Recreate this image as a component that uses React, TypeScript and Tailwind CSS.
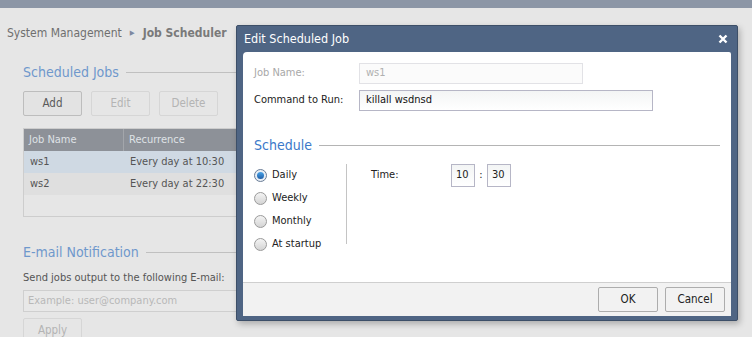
import React from 'react';

const font = { fontFamily: '"DejaVu Sans Condensed", "DejaVu Sans", Verdana, sans-serif' };

function GrayButton({ label, disabled }: { label: string; disabled?: boolean }) {
  return (
    <button
      className={
        'h-[25px] w-[59px] rounded-[2px] border text-[11.5px] ' +
        (disabled ? 'border-[#d6d6d6] bg-[#e6e6e6] text-[#b4b4b4]' : 'border-[#bdbdbd] bg-[#e3e3e3] text-[#5a5a5a]')
      }
    >
      {label}
    </button>
  );
}

function SectionTitle({ title, color, lineColor }: { title: string; color: string; lineColor: string }) {
  return (
    <div className="flex items-center gap-[7px] leading-[20px]">
      <span className={'text-[14px] whitespace-nowrap ' + color}>{title}</span>
      <div className={'h-px flex-1 ' + lineColor} />
    </div>
  );
}

function Radio({ label, checked }: { label: string; checked?: boolean }) {
  return (
    <label className="flex h-[23px] items-center gap-[5px] text-[11px] text-[#222]">
      <span
        className={
          'flex h-[13px] w-[13px] items-center justify-center rounded-full border ' +
          (checked ? 'border-[#6b7d96] bg-[#e8eef5]' : 'border-[#9a9a9a] bg-gradient-to-b from-[#f4f4f4] to-[#d4d4d4]')
        }
      >
        {checked && <span className="h-[7px] w-[7px] rounded-full bg-gradient-to-b from-[#4aa3e8] to-[#1f5fa8]" />}
      </span>
      {label}
    </label>
  );
}

const fieldBox = 'flex items-center border border-[#b6b6c6] bg-gradient-to-b from-[#f3f5f5] to-white';

function EditDialog() {
  return (
    <div className="absolute left-[236px] top-[25px] w-[502px] rounded-[2px] border border-[#3d4f68] bg-[#4f6584] shadow-[2px_3px_6px_rgba(0,0,0,0.25)]">
      <div className="flex h-[26px] items-center justify-between pl-[7px] pr-[9px] text-[12.5px] text-white">
        <span>Edit Scheduled Job</span>
        <svg width="10" height="10" viewBox="0 0 10 10">
          <path d="M1.5 1.5 L8.5 8.5 M8.5 1.5 L1.5 8.5" stroke="white" strokeWidth="2.4" />
        </svg>
      </div>
      <div className="mx-[6px] mb-[4px] overflow-hidden rounded-tl-[4px] rounded-tr-[2px] bg-white">
        <div className="px-[11px] pt-[11px]">
          <div className="flex h-[21px] items-center text-[11px]">
            <span className="w-[105px] text-[#a8a8a8]">Job Name:</span>
            <div className="flex h-[21px] w-[224px] items-center border border-[#e2e2e6] bg-[#fbfbfb] px-[6px] text-[#b0b0b0]">ws1</div>
          </div>
          <div className="mt-[6px] flex h-[21px] items-center text-[11px]">
            <span className="w-[105px] text-[#222]">Command to Run:</span>
            <div className={fieldBox + ' h-[21px] w-[294px] px-[6px] text-[#111]'}>killall wsdnsd</div>
          </div>
          <div className="mt-[24px]">
            <SectionTitle title="Schedule" color="text-[#3b79c9]" lineColor="bg-[#b4b4b4]" />
          </div>
          <div className="mt-[9px] flex">
            <div className="w-[92px]">
              <Radio label="Daily" checked />
              <Radio label="Weekly" />
              <Radio label="Monthly" />
              <Radio label="At startup" />
            </div>
            <div className="h-[80px] w-px bg-[#c4c4c4]" />
            <div className="flex h-[23px] items-center pl-[24px] text-[11px] text-[#222]">
              <span className="w-[80px]">Time:</span>
              <div className={fieldBox + ' h-[23px] w-[24px] px-[4px]'}>10</div>
              <span className="w-[12px] text-center">:</span>
              <div className={fieldBox + ' h-[23px] w-[24px] px-[4px]'}>30</div>
            </div>
          </div>
          <div className="h-[26px]" />
        </div>
        <div className="flex h-[34px] items-center justify-end gap-[7px] border-t border-[#cfcfcf] bg-[#f2f2f2] pr-[6px]">
          <button className="h-[25px] w-[60px] rounded-[2px] border border-[#adadad] bg-[#f2f2f2] text-[11.5px] text-[#222]">OK</button>
          <button className="h-[25px] w-[60px] rounded-[2px] border border-[#adadad] bg-[#f2f2f2] text-[11.5px] text-[#222]">Cancel</button>
        </div>
      </div>
    </div>
  );
}

export default function App() {
  return (
    <div className="relative h-[337px] w-[752px] overflow-hidden bg-[#e6e6e6]" style={font}>
      <div className="h-[8px] bg-[#8c96a6]" />
      <div className="flex h-[50px] items-center gap-[6px] pl-[7px] text-[12px]">
        <span className="text-[#6f6f6f]">System Management</span>
        <span className="mx-[2px] text-[7px] text-[#7e88a0]">▶</span>
        <span className="font-bold text-[#7a7a7a]">Job Scheduler</span>
      </div>
      <div className="px-[23px]">
        <div className="pt-[4px]">
          <SectionTitle title="Scheduled Jobs" color="text-[#6f98cc]" lineColor="bg-[#c0c0c0]" />
        </div>
        <div className="mt-[9px] flex gap-[9px]">
          <GrayButton label="Add" />
          <GrayButton label="Edit" disabled />
          <GrayButton label="Delete" disabled />
        </div>
        <div className="mt-[12px] border border-[#cdcdcd] text-[11px]">
          <div className="flex h-[22px] items-center bg-[#8d9198] text-[#dfe2e6]">
            <span className="w-[100px] border-r border-[#a3a6ab] pl-[5px] leading-[22px]">Job Name</span>
            <span className="pl-[5px]">Recurrence</span>
          </div>
          <div className="flex h-[22px] items-center bg-[#cfd9e3] text-[#555]">
            <span className="w-[100px] pl-[6px]">ws1</span>
            <span className="pl-[6px]">Every day at 10:30</span>
          </div>
          <div className="flex h-[22px] items-center bg-[#dfdfdf] text-[#555]">
            <span className="w-[100px] pl-[6px]">ws2</span>
            <span className="pl-[6px]">Every day at 22:30</span>
          </div>
          <div className="h-[21px]" />
        </div>
        <div className="mt-[25px]">
          <SectionTitle title="E-mail Notification" color="text-[#6f98cc]" lineColor="bg-[#c0c0c0]" />
        </div>
        <div className="mt-[8px] text-[11px] leading-[16px] text-[#555]">Send jobs output to the following E-mail:</div>
        <div className="mt-[4px] flex h-[22px] items-center border border-[#cfcfcf] bg-[#e8e8e8] px-[4px] text-[11px] text-[#b8b8b8]">
          Example: user@company.com
        </div>
        <div className="mt-[5px]">
          <GrayButton label="Apply" disabled />
        </div>
      </div>
      <EditDialog />
    </div>
  );
}
